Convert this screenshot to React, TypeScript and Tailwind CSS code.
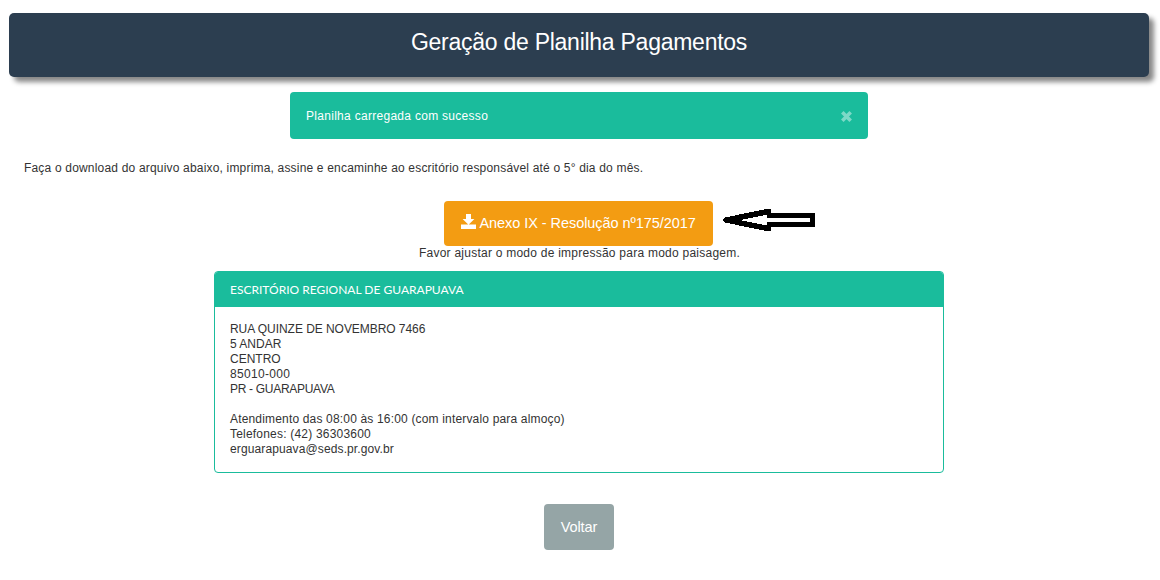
import React from "react";

const address = [
  { text: "RUA QUINZE DE NOVEMBRO 7466", spacing: "tracking-[-0.05px]" },
  { text: "5 ANDAR", spacing: "tracking-[0px]" },
  { text: "CENTRO", spacing: "tracking-[0px]" },
  { text: "85010-000", spacing: "tracking-[0.33px]" },
  { text: "PR - GUARAPUAVA", spacing: "tracking-[-0.3px]" },
  { text: "", spacing: "" },
  { text: "Atendimento das 08:00 às 16:00 (com intervalo para almoço)", spacing: "tracking-[0.17px]" },
  { text: "Telefones: (42) 36303600", spacing: "tracking-[0.2px]" },
  { text: "erguarapuava@seds.pr.gov.br", spacing: "tracking-[0.12px]" },
];

function DownloadIcon() {
  return (
    <svg className="mt-[13px] mr-[3px] h-[15px] w-[15px] shrink-0" viewBox="0 0 15 15" fill="currentColor" aria-hidden="true">
      <path d="M5 0h5v5h3.4L7.5 10.8 1.6 5H5zM0 10.4h15V15H0z" />
    </svg>
  );
}

function CloseIcon() {
  return (
    <svg className="h-[11px] w-[11px]" viewBox="0 0 11 11" stroke="currentColor" strokeWidth="3.6" aria-hidden="true">
      <path d="M1.3 1.3l8.4 8.4M9.7 1.3L1.3 9.7" />
    </svg>
  );
}

function Arrow() {
  return (
    <svg
      className="absolute top-[7px] left-[278px] h-6 w-[94px]"
      viewBox="722 208 94 24"
      shapeRendering="crispEdges"
      aria-hidden="true"
    >
      <path fill="black" d="M723 219L725 217.5 766 209H771V213H815V227H771V231H766L725 222.5 723 221Z" />
      <path fill="white" d="M740 220L764 215.4H767V218H810V222H767V225H764Z" />
    </svg>
  );
}

export default function App() {
  return (
    <div className="flex h-[580px] w-[1160px] flex-col overflow-hidden bg-white pt-[13px] pr-[11px] pl-[9px] font-['Liberation_Sans',Arial,sans-serif] text-[12px] leading-[15px] text-[#333]">
      <header className="flex h-16 shrink-0 justify-center rounded-[5px] bg-[#2c3e50] pt-[14px] text-white shadow-[5px_5px_5px_#888]">
        <h1 className="text-[23px] leading-[30px] tracking-[-0.26px] whitespace-nowrap">Geração de Planilha Pagamentos</h1>
      </header>

      <div className="mt-[15px] flex h-[47px] w-[578px] shrink-0 items-center justify-between self-center rounded-[4px] bg-[#1abc9c] pr-4 pl-4 text-white">
        <span className="pt-px tracking-[0.29px]">Planilha carregada com sucesso</span>
        <button className="mt-[2px] text-[#7dd9c7]" aria-label="Fechar">
          <CloseIcon />
        </button>
      </div>

      <p className="mt-[22px] ml-[15px] tracking-[0.184px] whitespace-nowrap">
        Faça o download do arquivo abaixo, imprima, assine e encaminhe ao escritório responsável até o 5° dia do mês.
      </p>

      <div className="relative mt-[25px] mr-px self-center">
        <button className="flex h-[45px] w-[269px] items-start rounded-[4px] bg-[#f39c12] pl-[17px] text-[14.5px] tracking-[-0.06px] whitespace-nowrap text-white">
          <DownloadIcon />
          <span className="mt-[15px] pl-[0.5px]">Anexo IX - Resolução nº175/2017</span>
        </button>
        <Arrow />
      </div>
      <p className="self-center pl-px tracking-[0.245px] whitespace-nowrap">Favor ajustar o modo de impressão para modo paisagem.</p>

      <section className="mt-[10px] h-[202px] w-[730px] shrink-0 self-center overflow-hidden rounded-[4px] border border-[#1abc9c]">
        <h2 className="h-[35px] bg-[#1abc9c] pt-[10px] pl-[15px] font-['Lato',sans-serif] text-[12px] leading-[15px] text-white">
          ESCRITÓRIO REGIONAL DE GUARAPUAVA
        </h2>
        <address className="pt-[15px] pl-[15px] not-italic">
          {address.map((line, i) => (
            <div key={i} className={`h-[15px] whitespace-nowrap ${line.spacing}`}>
              {line.text}
            </div>
          ))}
        </address>
      </section>

      <button className="mt-[31px] h-[46px] w-[70px] shrink-0 self-center rounded-[4px] bg-[#95a5a6] text-[14.5px] tracking-[-0.1px] text-white">
        Voltar
      </button>
    </div>
  );
}
